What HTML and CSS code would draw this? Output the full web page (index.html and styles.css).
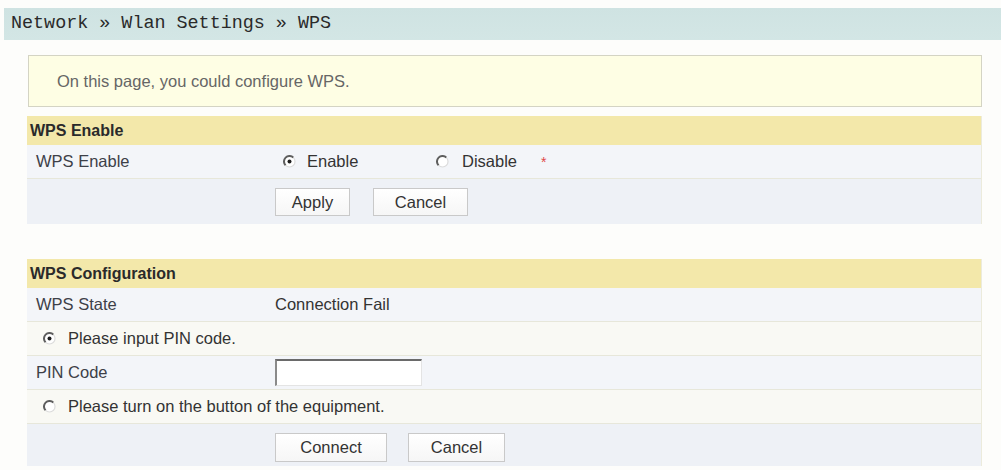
FILE: index.html
```html
<!DOCTYPE html>
<html>
<head>
<meta charset="utf-8">
<link rel="stylesheet" href="styles.css">
</head>
<body>
<div class="crumb">Network » Wlan Settings » WPS</div>
<div class="page">
  <div class="notice">On this page, you could configure WPS.</div>

  <section class="panel">
    <div class="panel-head">WPS Enable</div>
    <div class="row row-cool row-enable">
      <div class="label">WPS Enable</div>
      <div class="value">
        <label class="opt opt-first">
          <svg class="radio" viewBox="0 0 13 13" width="13" height="13"><circle cx="6.5" cy="6.5" r="5.3" fill="#fff"/><path d="M2.6 10.4 A5.5 5.5 0 0 1 10.4 2.6" stroke="#5e5e5e" stroke-width="2" fill="none"/><path d="M10.4 2.6 A5.5 5.5 0 0 1 2.6 10.4" stroke="#dcdcdc" stroke-width="1.2" fill="none"/><circle cx="6.5" cy="6.5" r="2" fill="#1e1e1e"/></svg>
          <span>Enable</span>
        </label>
        <label class="opt opt-second">
          <svg class="radio" viewBox="0 0 13 13" width="13" height="13"><circle cx="6.5" cy="6.5" r="5.3" fill="#fff"/><path d="M2.6 10.4 A5.5 5.5 0 0 1 10.4 2.6" stroke="#5e5e5e" stroke-width="2" fill="none"/><path d="M10.4 2.6 A5.5 5.5 0 0 1 2.6 10.4" stroke="#dcdcdc" stroke-width="1.2" fill="none"/></svg>
          <span>Disable</span>
        </label>
        <span class="req">*</span>
      </div>
    </div>
    <div class="row row-actions row-actions-1">
      <div class="label"></div>
      <div class="value">
        <button class="btn btn-apply">Apply</button>
        <button class="btn btn-cancel1">Cancel</button>
      </div>
    </div>
  </section>

  <section class="panel panel-config">
    <div class="panel-head">WPS Configuration</div>
    <div class="row row-cool">
      <div class="label">WPS State</div>
      <div class="value">Connection Fail</div>
    </div>
    <div class="row row-warm">
      <label class="choice">
        <svg class="radio" viewBox="0 0 13 13" width="13" height="13"><circle cx="6.5" cy="6.5" r="5.3" fill="#fff"/><path d="M2.6 10.4 A5.5 5.5 0 0 1 10.4 2.6" stroke="#5e5e5e" stroke-width="2" fill="none"/><path d="M10.4 2.6 A5.5 5.5 0 0 1 2.6 10.4" stroke="#dcdcdc" stroke-width="1.2" fill="none"/><circle cx="6.5" cy="6.5" r="2" fill="#1e1e1e"/></svg>
        <span>Please input PIN code.</span>
      </label>
    </div>
    <div class="row row-cool">
      <div class="label">PIN Code</div>
      <div class="value"><input class="pin" type="text"></div>
    </div>
    <div class="row row-warm">
      <label class="choice">
        <svg class="radio" viewBox="0 0 13 13" width="13" height="13"><circle cx="6.5" cy="6.5" r="5.3" fill="#fff"/><path d="M2.6 10.4 A5.5 5.5 0 0 1 10.4 2.6" stroke="#5e5e5e" stroke-width="2" fill="none"/><path d="M10.4 2.6 A5.5 5.5 0 0 1 2.6 10.4" stroke="#dcdcdc" stroke-width="1.2" fill="none"/></svg>
        <span>Please turn on the button of the equipment.</span>
      </label>
    </div>
    <div class="row row-actions row-actions-2">
      <div class="label"></div>
      <div class="value">
        <button class="btn btn-connect">Connect</button>
        <button class="btn btn-cancel2">Cancel</button>
      </div>
    </div>
  </section>
</div>
</body>
</html>
```

FILE: styles.css
```css
html, body {
  margin: 0;
  padding: 0;
  background: #fdfdfb;
}

body {
  font-family: "Liberation Sans", Arial, sans-serif;
  font-size: 16.5px;
  color: #333;
}

.crumb {
  margin: 8px 0 0 4px;
  height: 32px;
  background: linear-gradient(#cfe3e2, #d3e6e5);
  font-family: "Liberation Mono", "DejaVu Sans Mono", monospace;
  font-size: 18.4px;
  color: #2a2a2a;
  line-height: 32px;
  padding-left: 7px;
  white-space: nowrap;
}

.page {
  padding: 15px 19px 0 27px;
}

.notice {
  margin-left: 1px;
  height: 50px;
  background: #fefee4;
  border: 1px solid #d4d4c4;
  padding-left: 28px;
  display: flex;
  align-items: center;
  color: #666;
  font-size: 16.5px;
}

.panel {
  margin-top: 9px;
  border-right: 1px solid #ecebdc;
}

.panel-config {
  margin-top: 35px;
}

.panel-head {
  height: 29px;
  background: #f3e8aa;
  font-weight: bold;
  font-size: 16px;
  color: #2a2a2a;
  display: flex;
  align-items: center;
  padding-left: 3px;
}

.row {
  display: flex;
  align-items: center;
  height: 33px;
  border-bottom: 1px solid #e7e7da;
}

.row-cool {
  background: #f3f5f9;
}

.row-warm {
  background: #f9f9f4;
}

.label {
  width: 239px;
  padding-left: 9px;
  flex: none;
  color: #3d4048;
}

.value {
  display: flex;
  align-items: center;
}

.opt {
  display: flex;
  align-items: center;
}

.opt-first {
  width: 161px;
  padding-left: 8px;
  box-sizing: border-box;
}

.opt-first .radio {
  margin-right: 11px;
}

.opt-second .radio {
  margin-right: 13px;
}

.req {
  margin-left: 24px;
  color: #e04848;
  font-size: 14px;
}

.radio {
  flex: none;
  display: block;
}

.choice {
  display: flex;
  align-items: center;
  padding-left: 16px;
}

.choice .radio {
  margin-right: 12px;
}

.row-actions {
  align-items: flex-start;
  border-bottom: none;
  background: #eef1f6;
}

.row-actions-1 {
  height: 36px;
  padding-top: 9px;
}

.row-actions-2 {
  height: 33px;
  padding-top: 9px;
}

.btn {
  font-family: "Liberation Sans", Arial, sans-serif;
  font-size: 16.5px;
  color: #333;
  background: linear-gradient(#ffffff, #f6f6f6);
  border: 1px solid #c9c9c9;
  padding: 0;
  margin: 0;
  height: 28px;
}

.row-actions-2 .btn {
  height: 29px;
}

.btn-apply { width: 75px; margin-right: 23px; }
.btn-cancel1 { width: 95px; }
.btn-connect { width: 112px; margin-right: 21px; }
.btn-cancel2 { width: 97px; }

.pin {
  width: 147px;
  height: 27px;
  box-sizing: border-box;
  border-style: solid;
  border-width: 2px 1px 1px 2px;
  border-color: #6a6a6a #e4e4e4 #e4e4e4 #8a8a8a;
  background: #fff;
  padding: 0 3px;
  margin: 0;
}
```
